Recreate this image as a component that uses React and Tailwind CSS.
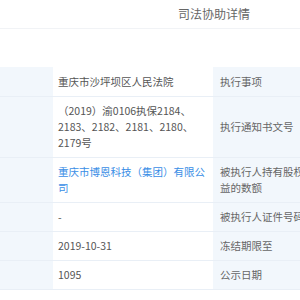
const rows = [
  { value: "重庆市沙坪坝区人民法院", label: "执行事项", first: true },
  {
    value: "（2019）渝0106执保2184、2183、2182、2181、2180、2179号",
    label: "执行通知书文号",
  },
  { value: "重庆市博恩科技（集团）有限公司", label: "被执行人持有股权益的数额", link: true },
  { value: "-", label: "被执行人证件号码" },
  { value: "2019-10-31", label: "冻结期限至" },
  { value: "1095", label: "公示日期" },
];

export default function App() {
  return (
    <div
      className="w-[300px] h-[300px] overflow-hidden bg-white text-[10.5px] leading-[16px] text-[#555]"
      style={{ fontFamily: '"Noto Sans CJK SC", "Liberation Sans", sans-serif' }}
    >
      {/* Header */}
      <div className="h-[29px] border-b border-[#f1f3f6] pl-[178px] pt-[6px]">
        <h1 className="text-[12px] leading-[16px] text-[#666] whitespace-nowrap">司法协助详情</h1>
      </div>

      <div className="h-[38px]" />

      {/* Table */}
      <div className="w-[320px]">
        {rows.map((row, i) => (
          <div key={i} className="flex border-b border-[#e9eff6]">
            <div className="w-[53px] shrink-0 bg-[#f2f7fc]" />
            <div
              className={`w-[160px] shrink-0 bg-white px-[5px] pb-[6px] ${
                row.first ? "pt-[7px]" : "pt-[6px]"
              } ${row.link ? "text-[#3a8ee6]" : ""}`}
            >
              {row.value}
            </div>
            <div
              className={`w-[100px] shrink-0 bg-[#f2f7fc] px-[7px] pb-[6px] text-[#666] ${
                row.first ? "pt-[7px]" : "pt-[6px]"
              } flex items-center`}
            >
              <span>{row.label}</span>
            </div>
          </div>
        ))}
      </div>
    </div>
  );
}
